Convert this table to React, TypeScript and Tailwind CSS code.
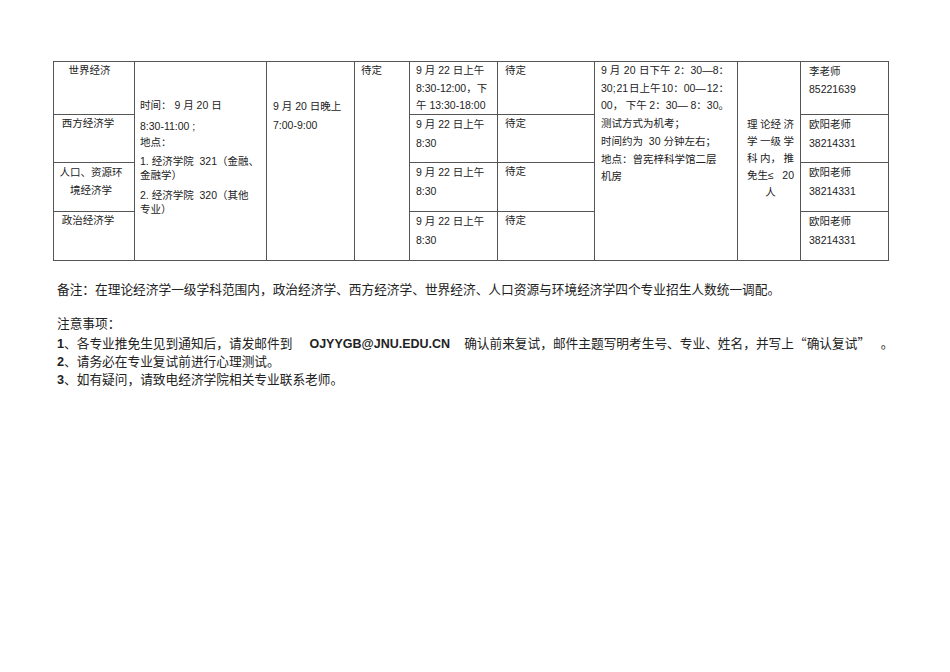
const cell = "border-r border-b border-[#555]";
const cjk = "font-['Noto_Sans_CJK_SC',sans-serif]";

function Justify({ parts }: { parts: string[] }) {
  return (
    <div className="flex justify-between whitespace-pre">
      {parts.map((p, i) => (
        <span key={i}>{p}</span>
      ))}
    </div>
  );
}

export default function App() {
  return (
    <div className="w-[950px] h-[672px] bg-white text-[#222] font-['Liberation_Sans','Noto_Sans_CJK_SC',sans-serif] pt-[61px]">
      <div className="ml-[53px] w-[836px] grid grid-cols-[81px_132px_88px_55px_88px_97px_143px_63px_88px] grid-rows-[53px_48px_49px_49px] border-l border-t border-[#555] text-[10.5px]">
        {/* row 1 */}
        <div className={`${cell} text-center pr-[9px] leading-[17px]`}>世界经济</div>
        <div className={`${cell} row-span-4 pl-[5px] pt-[36px] leading-[14px] whitespace-pre`}>
          <div>时间： 9 月 20 日</div>
          <div className="mt-[7px]">8:30-11:00 ;</div>
          <div className="mt-[2px]">地点：</div>
          <div className="mt-[5px]">1. 经济学院  321（金融、</div>
          <div>金融学）</div>
          <div className="mt-[6px]">2. 经济学院  320（其他</div>
          <div>专业）</div>
        </div>
        <div className={`${cell} row-span-4 pl-[6px] pt-[35px] leading-[19px] whitespace-pre`}>
          <div>9 月 20 日晚上</div>
          <div>7:00-9:00</div>
        </div>
        <div className={`${cell} row-span-4 pl-[6px] leading-[17px]`}>待定</div>
        <div className={`${cell} pl-[6px] leading-[17.5px] whitespace-pre`}>
          <div>9 月 22 日上午</div>
          <div>8:30-12:00，下</div>
          <div>午 13:30-18:00</div>
        </div>
        <div className={`${cell} pl-[7px] leading-[17px]`}>待定</div>
        <div className={`${cell} row-span-4 pl-[6px] pr-[8px] leading-[17.7px]`}>
          <Justify parts={["9 月", "20", "日下午", "2：30—8："]} />
          <Justify parts={["30;", "21", "日上午", "10：00—", "12："]} />
          <Justify parts={["00，", "下午", "2：30—", "8：30。"]} />
          <div>测试方式为机考；</div>
          <div className="whitespace-pre">时间约为  30 分钟左右；</div>
          <div>地点：曾宪梓科学馆二层</div>
          <div>机房</div>
        </div>
        <div className={`${cell} row-span-4 pl-[9px] pr-[6px] pt-[54px] leading-[17px]`}>
          <Justify parts={["理", "论经", "济"]} />
          <Justify parts={["学", "一级", "学"]} />
          <Justify parts={["科", "内，", "推"]} />
          <Justify parts={["免生≤", "20"]} />
          <div className="text-center">人</div>
        </div>
        <div className={`${cell} pl-[8px] leading-[18px]`}>
          <div>李老师</div>
          <div>85221639</div>
        </div>

        {/* row 2 */}
        <div className={`${cell} text-center pr-[12px] leading-[17px]`}>西方经济学</div>
        <div className={`${cell} pl-[6px] leading-[19px] whitespace-pre`}>
          <div>9 月 22 日上午</div>
          <div>8:30</div>
        </div>
        <div className={`${cell} pl-[7px] leading-[17px]`}>待定</div>
        <div className={`${cell} pl-[8px] leading-[19px]`}>
          <div>欧阳老师</div>
          <div>38214331</div>
        </div>

        {/* row 3 */}
        <div className={`${cell} text-center pr-[6px] leading-[18px] whitespace-nowrap`}>
          人口、资源环
          <br />
          境经济学
        </div>
        <div className={`${cell} pl-[6px] leading-[19px] whitespace-pre`}>
          <div>9 月 22 日上午</div>
          <div>8:30</div>
        </div>
        <div className={`${cell} pl-[7px] leading-[17px]`}>待定</div>
        <div className={`${cell} pl-[8px] leading-[19px]`}>
          <div>欧阳老师</div>
          <div>38214331</div>
        </div>

        {/* row 4 */}
        <div className={`${cell} text-center pr-[12px] leading-[17px]`}>政治经济学</div>
        <div className={`${cell} pl-[6px] leading-[19px] whitespace-pre`}>
          <div>9 月 22 日上午</div>
          <div>8:30</div>
        </div>
        <div className={`${cell} pl-[7px] leading-[17px]`}>待定</div>
        <div className={`${cell} pl-[8px] leading-[19px]`}>
          <div>欧阳老师</div>
          <div>38214331</div>
        </div>
      </div>

      <div className="ml-[57px] mt-[20px] text-[12.7px] leading-[18px] whitespace-nowrap">
        <div>备注：在理论经济学一级学科范围内，政治经济学、西方经济学、世界经济、人口资源与环境经济学四个专业招生人数统一调配。</div>
        <div className="mt-[16px]">注意事项：</div>
        <div className="mt-px">
          <b>1</b>、各专业推免生见到通知后，请发邮件到
          <b className="ml-[17px] mr-[14px] text-[12.5px]">OJYYGB@JNU.EDU.CN</b>
          确认前来复试，邮件主题写明考生号、专业、姓名，并写上<span className={cjk}>“</span>确认复试<span className={cjk}>”</span>
          <span className="ml-[17px]">。</span>
        </div>
        <div>
          <b>2</b>、请务必在专业复试前进行心理测试。
        </div>
        <div>
          <b>3</b>、如有疑问，请致电经济学院相关专业联系老师。
        </div>
      </div>
    </div>
  );
}
